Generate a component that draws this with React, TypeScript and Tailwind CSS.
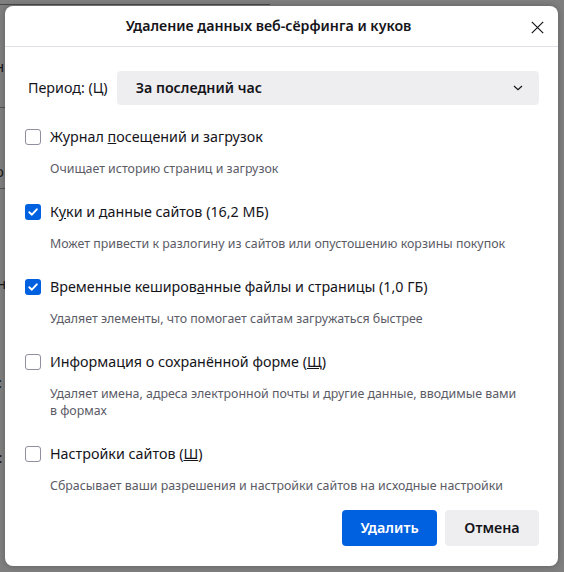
import React from "react";

const F = { fontFamily: '"Noto Sans", "Open Sans", sans-serif' };

function Check({ checked }: { checked: boolean }) {
  return checked ? (
    <div className="w-4 h-4 rounded-[3px] bg-[#0061e0] flex items-center justify-center shrink-0">
      <svg width="12" height="12" viewBox="0 0 12 12" fill="none">
        <path d="M2.3 6.2 L4.9 8.7 L9.8 3.3" stroke="white" strokeWidth="1.9" strokeLinecap="round" strokeLinejoin="round" />
      </svg>
    </div>
  ) : (
    <div className="w-4 h-4 rounded-[3px] border border-[#8f8f9d] bg-white shrink-0" />
  );
}

function Item({
  checked,
  label,
  desc,
}: {
  checked: boolean;
  label: React.ReactNode;
  desc: React.ReactNode;
}) {
  return (
    <div className="flex flex-col shrink-0">
      <div className="flex items-center h-[22px] pl-[20px]">
        <Check checked={checked} />
        <span className="ml-[9px] text-[14.3px] leading-[22px] text-[#15141a] whitespace-nowrap">{label}</span>
      </div>
      <div className="mt-[12px] pl-[45px] text-[12.4px] leading-[17px] text-[#5b5b66] whitespace-nowrap">{desc}</div>
    </div>
  );
}

export default function App() {
  return (
    <div className="relative w-[564px] h-[572px] bg-[#7f7f7f] overflow-hidden" style={F}>
      {/* faint page content behind overlay */}
      <div className="absolute left-0 top-[4px] w-[270px] h-[1px] bg-[#4a4a4a]" />
      <div className="absolute left-0 top-[107px] w-[6px] h-[1px] bg-[#555]" />
      <div className="absolute left-0 top-[188px] w-[6px] h-[1px] bg-[#555]" />
      <div className="absolute left-0 top-[56px] w-[5px] h-[20px] overflow-hidden">
        <span className="block -ml-[5px] text-[15px] leading-[20px] text-[#1a1a1a]">н</span>
      </div>
      <div className="absolute left-0 top-[161px] w-[5px] h-[20px] overflow-hidden">
        <span className="block -ml-[5px] text-[15px] leading-[20px] text-[#1a1a1a]">о</span>
      </div>
      <div className="absolute left-0 top-[273px] w-[5px] h-[20px] overflow-hidden">
        <span className="block -ml-[3px] text-[15px] leading-[20px] text-[#1a1a1a]">н</span>
      </div>
      <div className="absolute left-0 top-[372px] w-[5px] h-[20px] overflow-hidden">
        <span className="block -ml-[2px] text-[15px] leading-[20px] text-[#1a1a1a]">:</span>
      </div>
      <div className="absolute left-0 top-[447px] w-[5px] h-[20px] overflow-hidden">
        <span className="block -ml-[6px] text-[15px] leading-[20px] text-[#1a1a1a]">):</span>
      </div>

      {/* dialog */}
      <div className="absolute left-[5px] top-[6px] w-[553px] h-[560px] bg-white rounded-[8px] shadow-[0_0_6px_rgba(0,0,0,0.25)] flex flex-col">
        <div className="relative shrink-0 h-[41px] flex items-center justify-center pr-[26px] border-b border-[#e0e0e6]">
          <span className="text-[14.2px] font-semibold text-[#15141a]">
            Удаление данных веб-сёрфинга и куков
          </span>
          <div className="absolute right-[14px] top-[15px] w-[13px] h-[13px]">
            <svg width="13" height="13" viewBox="0 0 13 13" fill="none">
              <path d="M0.8 0.8 L12.2 12.2 M12.2 0.8 L0.8 12.2" stroke="#15141a" strokeWidth="1.2" />
            </svg>
          </div>
        </div>

        <div className="flex shrink-0 items-center mt-[24px] pl-[23px] pr-[19px]">
          <span className="text-[14.3px] text-[#15141a] whitespace-nowrap">Период: (Ц)</span>
          <div className="ml-[9px] flex-1 h-[34px] bg-[#eeeef0] rounded-[4px] flex items-center justify-between pl-[19px] pr-[16px]">
            <span className="text-[14.2px] font-semibold text-[#15141a]">За последний час</span>
            <svg width="10" height="6" viewBox="0 0 10 6" fill="none">
              <path d="M1 1 L5 4.6 L9 1" stroke="#15141a" strokeWidth="1.2" />
            </svg>
          </div>
        </div>

        <div className="flex flex-col shrink-0 gap-[24px] mt-[21px]">
          <Item
            checked={false}
            label={<>Журнал <u>п</u>осещений и загрузок</>}
            desc="Очищает историю страниц и загрузок"
          />
          <Item
            checked={true}
            label={<>К<u>у</u>ки и данные сайтов (16,2 МБ)</>}
            desc="Может привести к разлогину из сайтов или опустошению корзины покупок"
          />
          <Item
            checked={true}
            label={<>Временные кеширов<u>а</u>нные файлы и страницы (1,0 ГБ)</>}
            desc="Удаляет элементы, что помогает сайтам загружаться быстрее"
          />
          <Item
            checked={false}
            label={<>Информация о сохранённой форме (<u>Щ</u>)</>}
            desc={<>Удаляет имена, адреса электронной почты и другие данные, вводимые вами<br />в формах</>}
          />
          <Item
            checked={false}
            label={<>Настройки сайтов (<u>Ш</u>)</>}
            desc="Сбрасывает ваши разрешения и настройки сайтов на исходные настройки"
          />
        </div>

        <div className="flex shrink-0 justify-end gap-[8px] mt-[16px] pr-[19px]">
          <button className="w-[95px] h-[36px] rounded-[4px] bg-[#0061e0] text-white text-[14.3px] font-semibold">
            Удалить
          </button>
          <button className="w-[94px] h-[36px] rounded-[4px] bg-[#eeeef0] text-[#15141a] text-[14.3px] font-semibold">
            Отмена
          </button>
        </div>
      </div>
    </div>
  );
}
